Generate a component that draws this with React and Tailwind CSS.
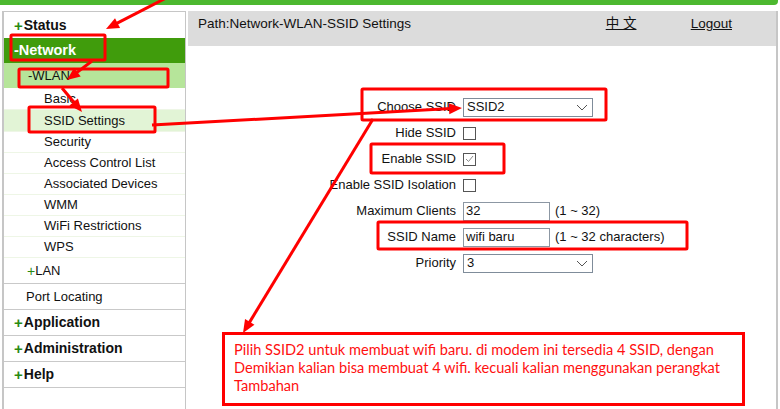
import React from "react";

const font = { fontFamily: '"Liberation Sans", Arial, sans-serif' };

function Arrow({ x1, y1, x2, y2, head = 13, w = 11 }) {
  const dx = x2 - x1;
  const dy = y2 - y1;
  const len = Math.sqrt(dx * dx + dy * dy);
  const ux = dx / len;
  const uy = dy / len;
  const bx = x2 - ux * head;
  const by = y2 - uy * head;
  const px = -uy * (w / 2);
  const py = ux * (w / 2);
  const pts = `${x2},${y2} ${bx + px},${by + py} ${bx - px},${by - py}`;
  return (
    <g>
      <line x1={x1} y1={y1} x2={bx + ux * 2} y2={by + uy * 2} stroke="#ff0000" strokeWidth="3" />
      <polygon points={pts} fill="#ff0000" />
    </g>
  );
}

function Box({ x, y, w, h }) {
  return <rect x={x} y={y} width={w} height={h} fill="none" stroke="#ff0000" strokeWidth="3" rx="1" />;
}

function SubItem({ label, active, h = "h-[21px]" }) {
  return (
    <div className={`${h} flex items-center pl-[40px] border-b border-[#eef6e6] ${active ? "bg-[#e2f4d6]" : ""}`}>
      {label}
    </div>
  );
}

function TopItem({ label }) {
  return (
    <div className="h-[26px] flex items-center pl-[10px] border-b border-[#c9c9c9] font-bold text-[14px]">
      <span className="text-[#2a8a10] text-[15px] leading-none mr-[1px]">+</span>
      {label}
    </div>
  );
}

function Select({ value }) {
  return (
    <div className="w-[130px] h-[19px] border border-[#7f8c9a] bg-white flex items-center justify-between pl-[3px] pr-[4px]">
      <span>{value}</span>
      <svg width="12" height="7" viewBox="0 0 12 7">
        <polyline points="1,1 6,6 11,1" fill="none" stroke="#555" strokeWidth="1" />
      </svg>
    </div>
  );
}

function Check({ checked }) {
  return (
    <div className="w-[13px] h-[13px] border border-[#555] bg-white flex items-center justify-center">
      {checked && (
        <svg width="9" height="8" viewBox="0 0 9 8">
          <polyline points="1,4 3.5,6.5 8,1" fill="none" stroke="#8a8a8a" strokeWidth="1" />
        </svg>
      )}
    </div>
  );
}

function Input({ value }) {
  return (
    <div className="w-[87px] h-[19px] border border-[#8c97a3] bg-white flex items-center pl-[2px]">{value}</div>
  );
}

function Row({ label, children }) {
  return (
    <div className="h-[26px] flex items-center">
      <div className="w-[275px] text-right pr-[7px]">{label}</div>
      <div className="flex items-center gap-[5px]">{children}</div>
    </div>
  );
}

export default function App() {
  return (
    <div className="w-[780px] h-[409px] relative bg-white overflow-hidden text-[13px] text-[#111]" style={font}>
      <div className="h-[5px] w-[778px] bg-[#4cb82f] rounded-br-[4px]" />
      <div className="flex mt-[6px] h-[398px]">
        {/* Sidebar */}
        <div className="ml-[2px] w-[184px] border-l-2 border-t border-r border-[#c6c6c6] flex flex-col">
          <div className="h-[26px] flex items-center pl-[10px] font-bold text-[14px]">
            <span className="text-[#2a8a10] text-[15px] leading-none mr-[1px]">+</span>Status
          </div>
          <div className="h-[25px] flex items-center pl-[10px] bg-[#409c0c] text-white font-bold text-[14.5px]">-Network</div>
          <div className="h-[25px] flex items-center pl-[24px] bg-[#b6e59a]">-WLAN</div>
          <SubItem label="Basic" h="h-[22px]" />
          <SubItem label="SSID Settings" active h="h-[22px]" />
          <SubItem label="Security" />
          <SubItem label="Access Control List" />
          <SubItem label="Associated Devices" />
          <SubItem label="WMM" />
          <SubItem label="WiFi Restrictions" />
          <SubItem label="WPS" />
          <div className="h-[26px] flex items-center pl-[23px] border-b border-[#c9c9c9]">
            <span className="text-[#2a8a10] text-[14px] leading-none">+</span>LAN
          </div>
          <div className="h-[26px] flex items-center pl-[22px] border-b border-[#c9c9c9]">Port Locating</div>
          <TopItem label="Application" />
          <TopItem label="Administration" />
          <TopItem label="Help" />
        </div>

        {/* Content */}
        <div className="ml-[2px] w-[590px] border-r-2 border-[#c6c6c6] flex flex-col">
          <div className="h-[35px] bg-[#dcdcdc] flex items-start pt-[3px] pl-[10px] text-[13.5px]">
            <span className="flex-1">Path:Network-WLAN-SSID Settings</span>
            <span className="underline w-[85px]" style={{ fontFamily: '"Liberation Sans", "Noto Sans CJK SC", sans-serif' }}>
              中 文
            </span>
            <span className="underline mr-[44px]">Logout</span>
          </div>
          <div className="pt-[48px] flex flex-col">
            <Row label="Choose SSID">
              <Select value="SSID2" />
            </Row>
            <Row label="Hide SSID">
              <Check />
            </Row>
            <Row label="Enable SSID">
              <Check checked />
            </Row>
            <Row label="Enable SSID Isolation">
              <Check />
            </Row>
            <Row label="Maximum Clients">
              <Input value="32" />
              <span>(1 ~ 32)</span>
            </Row>
            <Row label="SSID Name">
              <Input value="wifi baru" />
              <span>(1 ~ 32 characters)</span>
            </Row>
            <Row label="Priority">
              <Select value="3" />
            </Row>
          </div>
        </div>
      </div>

      {/* Annotation text box */}
      <div
        className="absolute left-[222px] top-[332px] w-[523px] h-[74px] border-[3px] border-[#ff0000] bg-white pl-[9px] pt-[6px] text-[#ff1010] text-[14.6px] leading-[18px]"
        style={{ fontFamily: 'Lato, "Liberation Sans", sans-serif' }}
      >
        Pilih SSID2 untuk membuat wifi baru. di modem ini tersedia 4 SSID, dengan
        <br />
        Demikian kalian bisa membuat 4 wifi. kecuali kalian menggunakan perangkat
        <br />
        Tambahan
      </div>

      {/* Annotation overlay */}
      <svg className="absolute inset-0 pointer-events-none" width="780" height="409" viewBox="0 0 780 409">
        <Box x={11} y={35} w={94} h={25} />
        <Box x={19} y={69} w={149} h={18} />
        <Box x={29} y={107} w={126} h={25} />
        <Box x={362} y={89} w={244} h={31} />
        <Box x={371} y={144} w={133} h={29} />
        <Box x={378} y={222} w={309} h={27} />
        <Arrow x1={168} y1={-3} x2={106} y2={29} />
        <Arrow x1={92} y1={61} x2={67} y2={80} />
        <Arrow x1={62} y1={88} x2={82} y2={112} />
        <Arrow x1={152} y1={125} x2={462} y2={108} />
        <Arrow x1={373} y1={119} x2={243} y2={333} />
      </svg>
    </div>
  );
}
